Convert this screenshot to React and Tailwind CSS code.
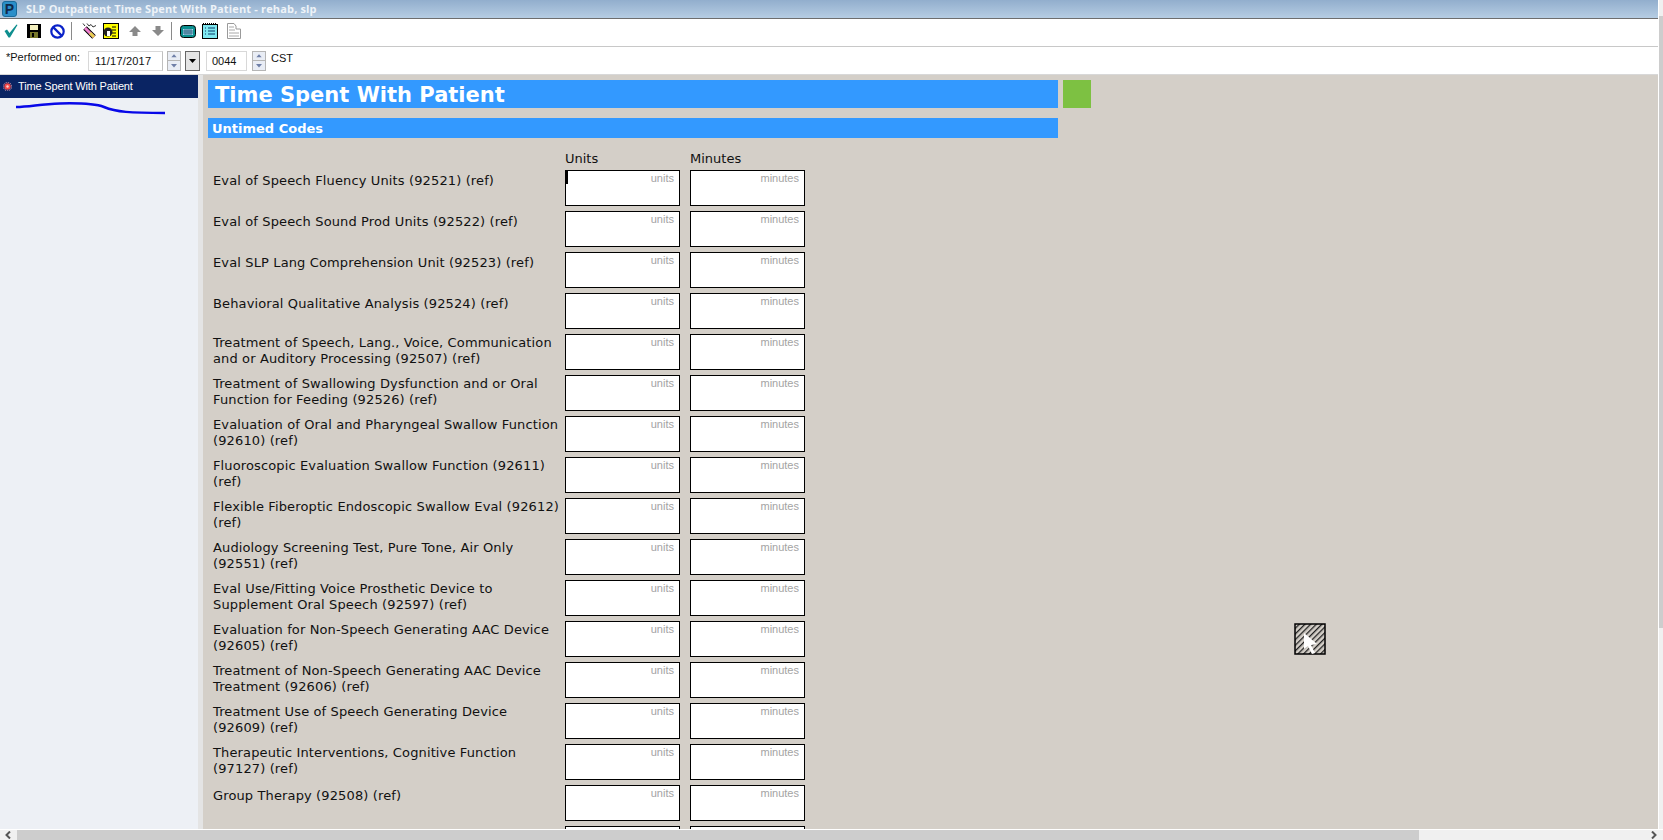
const rows = [
  ['Eval of Speech Fluency Units (92521) (ref)'],
  ['Eval of Speech Sound Prod Units (92522) (ref)'],
  ['Eval SLP Lang Comprehension Unit (92523) (ref)'],
  ['Behavioral Qualitative Analysis (92524) (ref)'],
  ['Treatment of Speech, Lang., Voice, Communication', 'and or Auditory Processing (92507) (ref)'],
  ['Treatment of Swallowing Dysfunction and or Oral', 'Function for Feeding (92526) (ref)'],
  ['Evaluation of Oral and Pharyngeal Swallow Function', '(92610) (ref)'],
  ['Fluoroscopic Evaluation Swallow Function (92611)', '(ref)'],
  ['Flexible Fiberoptic Endoscopic Swallow Eval (92612)', '(ref)'],
  ['Audiology Screening Test, Pure Tone, Air Only', '(92551) (ref)'],
  ['Eval Use/Fitting Voice Prosthetic Device to', 'Supplement Oral Speech (92597) (ref)'],
  ['Evaluation for Non-Speech Generating AAC Device', '(92605) (ref)'],
  ['Treatment of Non-Speech Generating AAC Device', 'Treatment (92606) (ref)'],
  ['Treatment Use of Speech Generating Device', '(92609) (ref)'],
  ['Therapeutic Interventions, Cognitive Function', '(97127) (ref)'],
  ['Group Therapy (92508) (ref)'],
  [],
];

function Field({ hint, caret }) {
  return (
    <div className="relative w-[115px] h-9 shrink-0 bg-white border border-black text-right pr-[5px] pt-px text-[11px] leading-[13px] text-[#a3a3a3] font-['Liberation_Sans',sans-serif]">
      {hint}
      {caret && <div className="absolute left-0 top-0 w-[2px] h-[13px] bg-black" />}
    </div>
  );
}

function Spinner() {
  return (
    <div className="flex flex-col w-[14px] h-[20px] border border-[#b5b5b5] bg-[#e9edf5] shrink-0">
      <svg width="12" height="9" viewBox="0 0 12 9" className="border-b border-[#b5b5b5]"><path d="M3 6 L6 2.5 L9 6 Z" fill="#6f7fa8" /></svg>
      <svg width="12" height="9" viewBox="0 0 12 9"><path d="M3 3 L6 6.5 L9 3 Z" fill="#6f7fa8" /></svg>
    </div>
  );
}

function Sep() {
  return <div className="w-px h-[18px] bg-[#8a8a8a] shrink-0" />;
}

function Toolbar() {
  return (
    <div className="h-[28px] shrink-0 flex items-center bg-white border-b border-[#c8c8c8] pl-[4px] pb-[3px]">
      <svg width="14" height="14" viewBox="0 0 14 14"><path d="M0.5 7 L3 5.5 L5.5 9 L12.5 0.5 L13.5 1 L6 13.5 L4.5 13.5 Z" fill="#0f8f8f" /></svg>
      <svg className="ml-[9px]" width="14" height="14" viewBox="0 0 14 14"><rect width="14" height="14" fill="#000" /><rect x="3" y="1" width="8" height="5" fill="#f4f0c0" /><rect x="3" y="8" width="8" height="6" fill="#77772a" /><rect x="5" y="9" width="2" height="4" fill="#000" /></svg>
      <svg className="ml-[9px]" width="15" height="15" viewBox="0 0 15 15"><circle cx="7.5" cy="7.5" r="6.2" fill="#fff" stroke="#0a22c8" strokeWidth="2.2" /><path d="M3.4 3.4 L11.6 11.6" stroke="#0a22c8" strokeWidth="2.2" /></svg>
      <div className="ml-[6px]"><Sep /></div>
      <svg className="ml-[8px]" width="17" height="16" viewBox="0 0 17 16"><path d="M5 5 L14 14" stroke="#000" strokeWidth="5" /><path d="M5 5 L14 14" stroke="#f080d0" strokeWidth="3" /><path d="M10 10 L14 14" stroke="#e8d050" strokeWidth="3" /><path d="M3 0.500 L5 3 M7 0.500 L9 3 L11 1.500 L13 4 L16 2.500" stroke="#333" fill="none" /></svg>
      <svg className="ml-[6px]" width="16" height="16" viewBox="0 0 16 16"><rect x="0.5" y="0.5" width="15" height="15" fill="#ffff00" stroke="#000" /><path d="M9 4 H13 M9 7 H13 M9 10 H13 M9 13 H13" stroke="#000" /><circle cx="5" cy="9" r="4.5" fill="#222" /><path d="M4 8 L7 8 L7 13 L4 13 Z" fill="#fff" /></svg>
      <svg className="ml-[10px]" width="12" height="12" viewBox="0 0 12 12"><path d="M6 1 L12 7 H8.5 V11 H3.5 V7 H0 Z" fill="#8a8a8a" /></svg>
      <svg className="ml-[11px]" width="12" height="12" viewBox="0 0 12 12"><path d="M6 11 L12 5 H8.5 V1 H3.5 V5 H0 Z" fill="#8a8a8a" /></svg>
      <div className="ml-[7px]"><Sep /></div>
      <svg className="ml-[8px]" width="16" height="13" viewBox="0 0 16 13"><rect x="0.5" y="0.5" width="15" height="12" rx="3" fill="#0a8f8f" stroke="#000" /><rect x="3" y="4" width="10" height="6" fill="#9fd8ef" /><path d="M3 6 H13 M3 8 H13 M5 4 V10 M7 4 V10 M9 4 V10 M11 4 V10" stroke="#1a4a6a" strokeWidth="0.7" /></svg>
      <svg className="ml-[6px]" width="16" height="16" viewBox="0 0 16 16"><rect x="0.5" y="1.5" width="15" height="14" fill="#7fe8f0" stroke="#000" /><path d="M1 0.5 H15" stroke="#000" strokeDasharray="1 1" /><path d="M6 5 H13 M6 8 H13 M6 11 H13 M3 5 H4 M3 8 H4 M3 11 H4" stroke="#0a3a6a" /></svg>
      <svg className="ml-[9px]" width="14" height="16" viewBox="0 0 14 16"><path d="M0.5 0.5 H7 L9 3 V6 H13.5 V15.5 H0.5 Z" fill="#fff" stroke="#9a9a9a" /><path d="M2 4 H7 M2 7 H8 M2 10 H12 M2 13 H12" stroke="#a8a8a8" /></svg>
    </div>
  );
}

function DateRow() {
  return (
    <div className="h-[27px] shrink-0 flex items-center bg-white pl-[6px] font-['Liberation_Sans',sans-serif] text-[11px] text-[#111]">
      <span className="w-[82px] -mt-[7px]">*Performed on:</span>
      <div className="w-[75px] h-[20px] border border-[#d8d8d8] border-r-[#c0c0c0] pl-[6px] leading-[18px] tracking-[0.2px]">11/17/2017</div>
      <div className="ml-[4px]"><Spinner /></div>
      <div className="ml-[4px] w-[15px] h-[20px] bg-[#e4e4e4] border border-[#666] flex items-center justify-center">
        <svg width="7" height="4" viewBox="0 0 7 4"><path d="M0 0 H7 L3.5 4 Z" fill="#000" /></svg>
      </div>
      <div className="ml-[6px] w-[41px] h-[20px] border border-[#d8d8d8] pl-[5px] leading-[18px]">0044</div>
      <div className="ml-[5px]"><Spinner /></div>
      <span className="ml-[5px] -mt-[5px]">CST</span>
    </div>
  );
}

export default function App() {
  return (
    <div className="relative w-[1663px] h-[840px] flex flex-col overflow-hidden bg-white font-['DejaVu_Sans',sans-serif]">
      <div className="flex-1 min-h-0 flex">
        <div className="flex-1 min-w-0 flex flex-col">
          <div className="h-[19px] shrink-0 flex items-center bg-gradient-to-b from-[#92aecd] to-[#b6cde3] border-b border-[#6e6e6e] pl-[2px]">
            <span className="w-[15px] h-[16px] rounded-[3px] bg-[#2b8fc9] border border-[#1a6a9a] text-[#10284a] text-[14px] leading-[14px] font-bold text-center font-['Liberation_Sans',sans-serif]">P</span>
            <span className="ml-[9px] text-[11px] tracking-[0.16px] font-bold text-[#eef3f8] font-['Open_Sans',sans-serif]">SLP Outpatient Time Spent With Patient - rehab, slp</span>
          </div>
          <Toolbar />
          <DateRow />
          <div className="flex-1 min-h-0 flex border-t border-[#d8d8d8]">
            <aside className="w-[198px] shrink-0 bg-[#edf0f5] relative">
              <div className="h-[23px] bg-[#0a2463] flex items-center pl-[3px] text-white text-[11px] tracking-[-0.15px] font-['Liberation_Sans',sans-serif]">
                <svg width="9" height="9" viewBox="0 0 9 9"><circle cx="4.5" cy="4.5" r="3.2" fill="#f04848" /><circle cx="4.5" cy="4.5" r="1.2" fill="#ffd0d0" /><circle cx="4.5" cy="4.5" r="4.2" fill="none" stroke="#e8a0b0" strokeDasharray="1 1" /></svg>
                <span className="ml-[6px]">Time Spent With Patient</span>
              </div>
              <svg className="absolute left-0 top-[23px]" width="198" height="24" viewBox="0 0 198 24">
                <path d="M16 9 C30 9 40 6 60 5.500 C80 5 96 6 104 9 C116 14 130 15 165 15" stroke="#0808e8" strokeWidth="2.500" fill="none" />
              </svg>
            </aside>
            <div className="w-[5px] shrink-0 bg-[#e4e4e4]" />
            <main className="flex-1 min-w-0 bg-[#d4cfc8] pl-[5px] pt-[5px] overflow-hidden">
              <div className="flex gap-[5px]">
                <div className="w-[850px] h-[28px] bg-[#3399ff] pl-[7px] text-white font-bold text-[21px] leading-[30px]">Time Spent With Patient</div>
                <div className="w-[28px] h-[28px] bg-[#7dc142]" />
              </div>
              <div className="mt-[10px] w-[850px] h-[20px] bg-[#3399ff] pl-[4px] text-white font-bold text-[13px] leading-[22px]">Untimed Codes</div>
              <div className="mt-[12px] pl-[357px] flex text-[13px] leading-[18px] text-[#111]">
                <span className="w-[125px]">Units</span>
                <span>Minutes</span>
              </div>
              <div className="mt-[2px] flex flex-col gap-[5px]">
                {rows.map((r, i) => (
                  <div key={i} className="flex h-9 shrink-0">
                    <div className={r.length === 1
                      ? "w-[357px] pl-[5px] pt-[3px] text-[13px] tracking-[0.13px] leading-[16px] text-[#111] whitespace-nowrap"
                      : "w-[357px] pl-[5px] pt-px text-[13px] tracking-[0.13px] leading-[16px] text-[#111] whitespace-nowrap"}>
                      {r.map((line, j) => <div key={j}>{line}</div>)}
                    </div>
                    <Field hint={r.length ? 'units' : ''} caret={i === 0} />
                    <div className="w-[10px]" />
                    <Field hint={r.length ? 'minutes' : ''} />
                  </div>
                ))}
              </div>
            </main>
          </div>
        </div>
        <div className="w-[5px] shrink-0 border-l border-white bg-[#f0f0f0] pt-[16px]">
          <div className="h-[612px] bg-[#cdcdcd]" />
        </div>
      </div>
      <div className="h-[11px] shrink-0 border-t border-white bg-[#f0f0f0] flex items-center">
        <svg className="ml-[5px]" width="7" height="8" viewBox="0 0 7 8"><path d="M5 0.5 L1.500 4 L5 7.5" stroke="#555" strokeWidth="2" fill="none" /></svg>
        <div className="ml-[5px] w-[1402px] h-full bg-[#cdcdcd]" />
        <div className="flex-1" />
        <svg className="mr-[6px]" width="7" height="8" viewBox="0 0 7 8"><path d="M2 0.5 L5.500 4 L2 7.5" stroke="#555" strokeWidth="2" fill="none" /></svg>
      </div>
      <div className="absolute left-[1294px] top-[623px]">
        <svg width="32" height="32" viewBox="0 0 32 32">
          <defs>
            <pattern id="hatch" width="4" height="4" patternUnits="userSpaceOnUse" patternTransform="rotate(45)">
              <rect width="4" height="4" fill="#d4cfc8" />
              <rect width="1.300" height="4" fill="#222" />
            </pattern>
          </defs>
          <rect x="1" y="1" width="30" height="30" fill="url(#hatch)" stroke="#000" strokeWidth="1.500" />
          <path d="M10 10 L10 26 L14 23 L18 31 L21 30 L17 22 L23 21 Z" fill="#fff" />
        </svg>
      </div>
    </div>
  );
}
